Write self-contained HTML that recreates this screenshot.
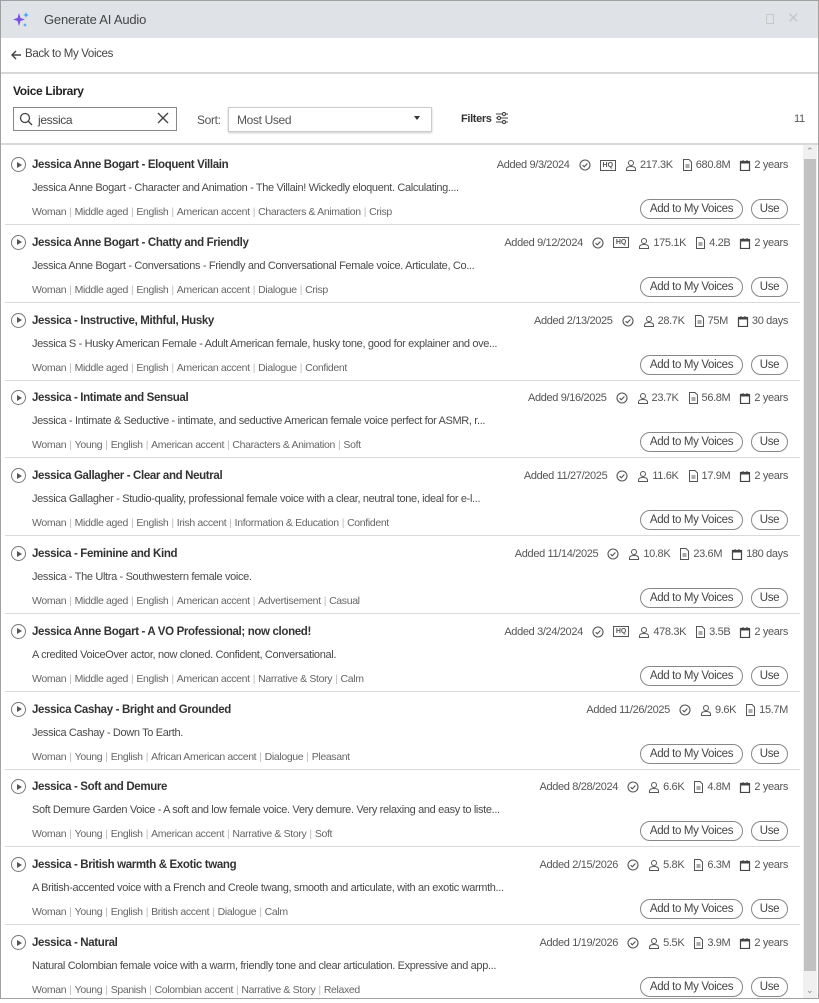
<!DOCTYPE html>
<html><head><meta charset="utf-8"><style>
*{box-sizing:border-box;margin:0;padding:0}
body{width:819px;height:999px;overflow:hidden;background:#fff;font-family:"Liberation Sans",sans-serif;color:#333;position:relative;font-size:11px;letter-spacing:-0.35px}
.frame{position:absolute;inset:0;border:1px solid #a0a0a0}
.titlebar{position:absolute;left:1px;top:1px;right:1px;height:37px;background:#dfe3e8}
.titlebar .t{position:absolute;left:43px;top:11px;font-size:13px;color:#444;letter-spacing:-0.2px}
.a{position:absolute;white-space:nowrap}
.row{position:absolute;left:5px;width:795px;height:78px;border-bottom:1px solid #d9d9d9}
.play{position:absolute;left:6px;top:10px;width:15px;height:15px;border:1px solid #777;border-radius:50%}
.play:after{content:"";position:absolute;left:5px;top:3.5px;border-left:5px solid #555;border-top:3.5px solid transparent;border-bottom:3.5px solid transparent}
.tt{position:absolute;left:27px;top:12px;font-weight:bold;font-size:11.5px;color:#333;white-space:nowrap}
.ds{position:absolute;left:27px;top:35px;color:#4a4a4a;white-space:nowrap}
.tg{position:absolute;left:27px;top:59px;color:#666;font-size:10.5px;white-space:nowrap}
.tg i{font-style:normal;color:#bbb;margin:0 3px}
.meta{position:absolute;right:12px;top:12px;color:#555;white-space:nowrap;display:flex;align-items:center;gap:3px}
.btn{position:absolute;top:52px;height:20px;border:1px solid #888;border-radius:10px;font-size:11.5px;color:#444;text-align:center;line-height:18px;background:#fff}
.b1{right:57px;width:103px}.b2{right:12px;width:37px}
.hq{display:inline-block;border:1.3px solid #555;font-size:7px;font-weight:bold;padding:0 2px;line-height:9px;letter-spacing:0}
</style></head><body>
<div class="titlebar">
<svg style="position:absolute;left:11px;top:10px" width="18" height="18" viewBox="0 0 18 18"><path d="M7 2 L8.5 7 L13 8.5 L8.5 10 L7 15 L5.5 10 L1 8.5 L5.5 7Z" fill="#7b4fe0"/><path d="M14 1 L14.8 3.2 L17 4 L14.8 4.8 L14 7 L13.2 4.8 L11 4 L13.2 3.2Z" fill="#3aa0f0"/><path d="M13 12 L13.6 13.4 L15 14 L13.6 14.6 L13 16 L12.4 14.6 L11 14 L12.4 13.4Z" fill="#3aa0f0"/></svg>
<div class="t">Generate AI Audio</div>
<div class="a" style="left:765px;top:13px;width:8px;height:10px;border:1px solid #c8c8c8"></div>
<div class="a" style="left:786px;top:8px;font-size:15px;color:#c8c8c8">✕</div>
</div>
<svg class="a" style="left:10px;top:49px" width="12" height="12" viewBox="0 0 12 12"><path d="M11 6H2M6 2L2 6L6 10" fill="none" stroke="#444" stroke-width="1.4"/></svg>
<div class="a" style="left:25px;top:48px;font-size:11.5px;color:#444">Back to My Voices</div>
<div class="a" style="left:1px;top:72px;width:817px;height:2px;background:#d8d8d8"></div>
<div class="a" style="left:13px;top:84px;font-weight:bold;font-size:12px;color:#222">Voice Library</div>
<div class="a" style="left:13px;top:107px;width:164px;height:24px;border:1px solid #888"></div>
<svg class="a" style="left:19px;top:112px" width="14" height="14" viewBox="0 0 14 14"><circle cx="6" cy="6" r="4.5" fill="none" stroke="#444" stroke-width="1.3"/><path d="M9.3 9.3 L13 13" stroke="#444" stroke-width="1.4"/></svg>
<div class="a" style="left:38px;top:113px;font-size:12px;color:#444">jessica</div>
<svg class="a" style="left:157px;top:112px" width="12" height="12" viewBox="0 0 12 12"><path d="M1 1L11 11M11 1L1 11" stroke="#444" stroke-width="1.4"/></svg>
<div class="a" style="left:197px;top:113px;font-size:12px;color:#555">Sort:</div>
<div class="a" style="left:228px;top:107px;width:204px;height:25px;border:1px solid #ccc;box-shadow:0 1px 2px #ccc"></div>
<div class="a" style="left:237px;top:113px;font-size:12px;color:#555">Most Used</div>
<div class="a" style="left:414px;top:116px;border-top:4px solid #333;border-left:3.5px solid transparent;border-right:3.5px solid transparent"></div>
<div class="a" style="left:461px;top:113px;font-size:11px;font-weight:bold;color:#333">Filters</div>
<svg class="a" style="left:495px;top:111px" width="14" height="14" viewBox="0 0 14 14" fill="none" stroke="#444" stroke-width="1.1"><path d="M1 3H13M1 7H13M1 11H13"/><circle cx="9" cy="3" r="1.6" fill="#fff"/><circle cx="4" cy="7" r="1.6" fill="#fff"/><circle cx="9" cy="11" r="1.6" fill="#fff"/></svg>
<div class="a" style="left:794px;top:113px;color:#555">11</div>
<div class="a" style="left:1px;top:143px;width:817px;height:2px;background:#d8d8d8"></div>
<div class="a" style="left:803px;top:145px;width:14px;height:853px;background:#f0f0f0"></div>
<div class="a" style="left:804px;top:159px;width:12px;height:812px;background:#c1c1c1"></div>
<div class="a" style="left:806px;top:146px;font-size:9px;color:#888">⌃</div>
<div class="a" style="left:806px;top:985px;font-size:9px;color:#888">⌄</div>

<div id="rows"></div>
<script>
var D=[
["Jessica Anne Bogart - Eloquent Villain","Jessica Anne Bogart - Character and Animation - The Villain! Wickedly eloquent. Calculating....","Woman|Middle aged|English|American accent|Characters & Animation|Crisp","9/3/2024",1,"217.3K","680.8M","2 years"],
["Jessica Anne Bogart - Chatty and Friendly","Jessica Anne Bogart - Conversations - Friendly and Conversational Female voice. Articulate, Co...","Woman|Middle aged|English|American accent|Dialogue|Crisp","9/12/2024",1,"175.1K","4.2B","2 years"],
["Jessica - Instructive, Mithful, Husky","Jessica S - Husky American Female - Adult American female, husky tone, good for explainer and ove...","Woman|Middle aged|English|American accent|Dialogue|Confident","2/13/2025",0,"28.7K","75M","30 days"],
["Jessica - Intimate and Sensual","Jessica - Intimate & Seductive -  intimate, and seductive American female voice perfect for ASMR, r...","Woman|Young|English|American accent|Characters & Animation|Soft","9/16/2025",0,"23.7K","56.8M","2 years"],
["Jessica Gallagher - Clear and Neutral","Jessica Gallagher - Studio-quality, professional female voice with a clear, neutral tone, ideal for e-l...","Woman|Middle aged|English|Irish accent|Information & Education|Confident","11/27/2025",0,"11.6K","17.9M","2 years"],
["Jessica - Feminine and Kind","Jessica - The Ultra - Southwestern female voice.","Woman|Middle aged|English|American accent|Advertisement|Casual","11/14/2025",0,"10.8K","23.6M","180 days"],
["Jessica Anne Bogart - A VO Professional; now cloned!","A credited VoiceOver actor, now cloned. Confident, Conversational.","Woman|Middle aged|English|American accent|Narrative & Story|Calm","3/24/2024",1,"478.3K","3.5B","2 years"],
["Jessica Cashay - Bright and Grounded","Jessica Cashay - Down To Earth.","Woman|Young|English|African American accent|Dialogue|Pleasant","11/26/2025",0,"9.6K","15.7M",""],
["Jessica - Soft and Demure","Soft Demure Garden Voice - A soft and low female voice. Very demure. Very relaxing and easy to liste...","Woman|Young|English|American accent|Narrative & Story|Soft","8/28/2024",0,"6.6K","4.8M","2 years"],
["Jessica - British warmth & Exotic twang","A British-accented voice with a French and Creole twang, smooth and articulate, with an exotic warmth...","Woman|Young|English|British accent|Dialogue|Calm","2/15/2026",0,"5.8K","6.3M","2 years"],
["Jessica - Natural","Natural Colombian female voice with a warm, friendly tone and clear articulation. Expressive and app...","Woman|Young|Spanish|Colombian accent|Narrative & Story|Relaxed","1/19/2026",0,"5.5K","3.9M","2 years"]];
var chk='<svg width="12" height="12" viewBox="0 0 12 12" style="margin-left:6px"><circle cx="6" cy="6" r="5" fill="none" stroke="#555" stroke-width="1.1"/><path d="M3.6 6.2L5.3 7.8L8.4 4.5" fill="none" stroke="#555" stroke-width="1.1"/></svg>';
var usr='<svg width="12" height="12" viewBox="0 0 12 12" style="margin-left:6px"><circle cx="6" cy="4" r="2.5" fill="none" stroke="#555"/><path d="M1.5 11.5V10C1.5 8.5 3 7.5 6 7.5S10.5 8.5 10.5 10V11.5Z" fill="none" stroke="#555"/></svg>';
var doc='<svg width="11" height="12" viewBox="0 0 11 12" style="margin-left:6px"><path d="M1.5 .5H7L9.5 3V11.5H1.5Z" fill="none" stroke="#555"/><path d="M3.5 6H7.5M3.5 8H7.5" stroke="#555"/></svg>';
var cal='<svg width="12" height="12" viewBox="0 0 12 12" style="margin-left:6px"><rect x="1.5" y="2.5" width="9" height="9" fill="none" stroke="#444" stroke-width="1.2"/><rect x="1.5" y="2.5" width="9" height="2" fill="#444"/><path d="M4 1V3M8 1V3" stroke="#444"/></svg>';
var h='';
D.forEach(function(r,i){
var top=147+i*77.8;
var m='Added '+r[3]+chk+(r[4]?'<span class="hq" style="margin-left:6px">HQ</span>':'')+usr+r[5]+doc+r[6]+(r[7]?cal+r[7]:'');
h+='<div class="row" style="top:'+top+'px'+(i==10?';border-bottom:none':'')+'"><div class="play"></div><div class="tt">'+r[0]+'</div><div class="meta">'+m+'</div><div class="ds">'+r[1]+'</div><div class="tg">'+r[2].split('|').join('<i>|</i>')+'</div><div class="btn b1">Add to My Voices</div><div class="btn b2">Use</div></div>';
});
document.getElementById('rows').innerHTML=h;
</script>
<div class="frame"></div>
</body></html>
